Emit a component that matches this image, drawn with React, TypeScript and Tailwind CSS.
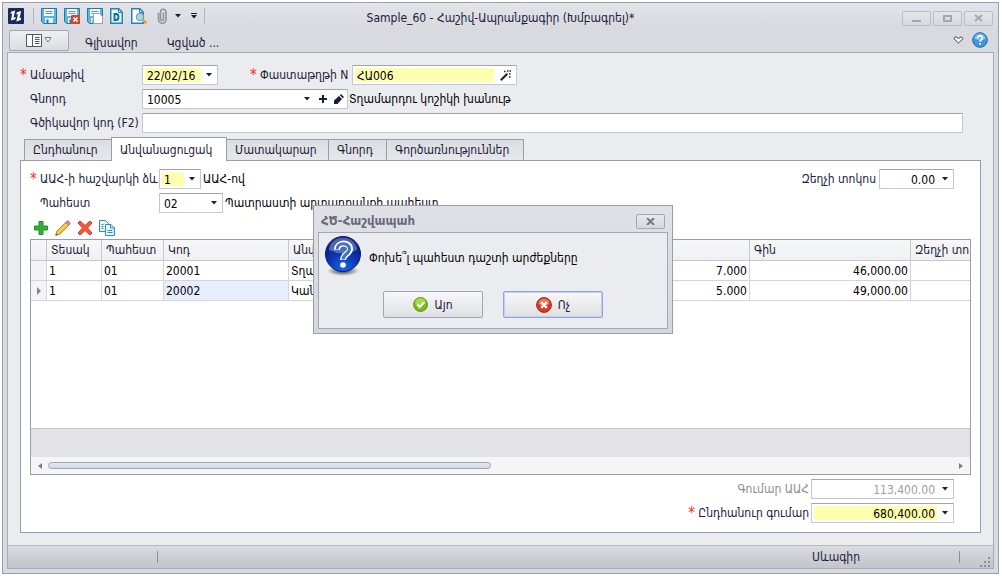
// App.tsx
import type { ReactNode } from "react";

const inputBorder =
  "border border-[#c6c7d0] border-t-[#a3a4b3] rounded-[1px] bg-white";

const Caret = () => (
  <svg width="6" height="4" viewBox="0 0 6 4" className="shrink-0" aria-hidden="true">
    <path d="M0 0h6L3 3.500z" fill="#1e1e32" />
  </svg>
);

const CaretButton = ({ label }: { label: string }) => (
  <button type="button" aria-label={label} className="flex h-full w-4 shrink-0 items-center justify-center">
    <Caret />
  </button>
);

type FieldProps = {
  id: string;
  value: string;
  width: string;
  required?: boolean;
  right?: boolean;
  muted?: boolean;
  children?: ReactNode;
};

const Field = ({ id, value, width, required, right, muted, children }: FieldProps) => (
  <div className={`flex h-5 shrink-0 items-center pl-[2px] ${inputBorder} ${width}`}>
    <input
      id={id}
      defaultValue={value}
      disabled={muted}
      className={`h-[14px] w-full min-w-0 pt-px px-[2px] outline-none ${
        required ? "bg-[#ffffb0]" : "bg-white"
      } ${right ? "text-right" : "text-left"} ${muted ? "text-[#a0a0a0]" : "text-black"}`}
    />
    {children}
  </div>
);

const Label = ({ htmlFor, required, children }: { htmlFor: string; required?: boolean; children: ReactNode }) => (
  <label htmlFor={htmlFor} className="flex shrink-0 whitespace-nowrap">
    <span className="w-[10px] shrink-0 text-[15px] text-[#ff2a2a]" aria-hidden="true">
      {required ? "*" : ""}
    </span>
    {children}
  </label>
);

const Logo = () => (
  <svg width="16" height="16" viewBox="0 0 16 16" aria-hidden="true">
    <rect width="16" height="16" rx="1" fill="#1d2a5c" />
    <path d="M3 3.800 7.200 2.500 5.600 9.500 7.800 9l-.6 2.200-4.400 1.300L4.300 5.600l-1.800.4z" fill="#fff" />
    <path d="M8.800 4.300 13.200 3l-1.700 7 1.800-.3-.6 2.200L8.300 13.500 10 6.200l-1.700.4z" fill="#fff" />
  </svg>
);

const Floppy = ({ children }: { children?: ReactNode }) => (
  <svg width="16" height="16" viewBox="0 0 16 16" aria-hidden="true">
    <path d="M.5.5h15v15h-13l-2-2z" fill="#5fb6dd" stroke="#1b7bb0" />
    <path d="M3 1h10v7H3z" fill="#f4fafd" />
    <path d="M4.500 3.500h7M4.500 5.500h7" stroke="#6f8ea3" />
    <path d="M4 10h8v5H4z" fill="#e9f2f8" />
    <path d="M5.500 11.500h2V15h-2z" fill="#1b7bb0" />
    {children}
  </svg>
);

const DocIcon = () => (
  <svg width="13" height="16" viewBox="0 0 13 16" aria-hidden="true">
    <path d="M.75.75h8l3.500 3.500v11H.75z" fill="#e8f5fb" stroke="#1e86ba" strokeWidth="1.500" />
    <path d="M8.500 1v3.500H12" fill="none" stroke="#1e86ba" />
    <path d="M4.500 6v6H6a2.500 3 0 0 0 0-6z" fill="none" stroke="#0f6a9b" strokeWidth="1.800" />
  </svg>
);

const PreviewIcon = () => (
  <svg width="16" height="16" viewBox="0 0 16 16" aria-hidden="true">
    <path d="M.75.75h8l3.500 3.500v11H.75z" fill="#fff" stroke="#1e86ba" strokeWidth="1.500" />
    <path d="M8.500 1v3.500H12" fill="none" stroke="#1e86ba" />
    <circle cx="9" cy="9" r="3.800" fill="#a5d6ee" stroke="#7b8c99" />
    <path d="m12.300 12.300 2.200 2.200" stroke="#eaa326" strokeWidth="2.600" strokeLinecap="round" />
  </svg>
);

const ClipIcon = () => (
  <svg width="10" height="16" viewBox="0 0 10 16" aria-hidden="true">
    <path
      d="M6.500 4.500v6.500a1.500 1.500 0 0 1-3 0V4a2.500 2.500 0 0 1 5.500 0v7.500a3.700 3.700 0 0 1-7.500 0V5"
      fill="none"
      stroke="#92939c"
      strokeWidth="1.600"
    />
  </svg>
);

const Divider = () => <span className="h-4 w-px shrink-0 bg-[#b4b5be]" />;

const TitleBar = () => (
  <header className="flex h-[25px] items-center bg-linear-to-b from-[#e3e4e9] to-[#d9dadf]">
    <div className="flex flex-1 items-center pl-[5px] pt-[1px]">
      <Logo />
      <div className="ml-[9px] flex items-center gap-[7px]">
        <Divider />
        <button type="button" aria-label="Save"><Floppy /></button>
        <button type="button" aria-label="Save and close">
          <Floppy>
            <rect x="7" y="7" width="9" height="9" rx="1" fill="#d8432c" />
            <path d="m9.500 9.500 4 4m0-4-4 4" stroke="#fff" strokeWidth="1.500" />
          </Floppy>
        </button>
        <button type="button" aria-label="Save and new">
          <Floppy>
            <path d="M6.500 5.500h6l3 3v7h-9z" fill="#fff" stroke="#9aa4ad" />
          </Floppy>
        </button>
        <button type="button" aria-label="Document"><DocIcon /></button>
        <button type="button" aria-label="Preview" className="ml-px"><PreviewIcon /></button>
        <button type="button" aria-label="Attach" className="ml-[3px] flex items-center gap-2">
          <ClipIcon />
          <Caret />
        </button>
        <button type="button" aria-label="Customize" className="ml-[3px] flex flex-col items-center gap-px">
          <span className="h-px w-[6px] bg-[#1e1e32]" />
          <Caret />
        </button>
        <Divider />
      </div>
    </div>
    <h1 className="pt-1">Sample_60 - Հաշիվ-Ապրանքագիր (Խմբագրել)*</h1>
    <div className="flex flex-1 items-end justify-end gap-[2px] self-stretch pb-[2px] pr-[5px]">
      {[
        { name: "Minimize", path: "M9 9h9" },
        { name: "Maximize", path: "M10 4h7v5h-7z" },
        { name: "Close", path: "m10 3 7 6m0-6-7 6" },
      ].map((b) => (
        <button
          key={b.name}
          type="button"
          aria-label={b.name}
          className="h-[15px] w-[29px] rounded-[2px] border border-[#bcbdc6] bg-linear-to-b from-[#e4e5e9] to-[#d8d9de]"
        >
          <svg width="27" height="13" viewBox="0 0 27 13" aria-hidden="true">
            <path d={b.path} fill="none" stroke="#a5a6b1" strokeWidth="2" />
          </svg>
        </button>
      ))}
    </div>
  </header>
);

const Ribbon = () => (
  <nav className="flex h-6 items-center pl-[6px] pr-[10px]">
    <button
      type="button"
      aria-label="Menu"
      className="flex h-[21px] w-[60px] items-center justify-center gap-[2px] rounded-[2px] border border-[#a5a6b3] bg-linear-to-b from-[#eeeff2] to-[#dcdde2]"
    >
      <svg width="16" height="13" viewBox="0 0 16 13" aria-hidden="true">
        <path d="M.5.5h15v12H.5zM6.500.5v12" fill="#fafafa" stroke="#55555e" />
        <path d="M9 3.500h4.500M9 5.500h4.500M9 7.500h4.500M9 9.500h4.500" stroke="#55555e" />
      </svg>
      <svg width="8" height="6" viewBox="0 0 8 6" aria-hidden="true">
        <path d="M1 .5h6L4 5z" fill="#fff" stroke="#77777f" />
      </svg>
    </button>
    <button type="button" className="ml-4 pt-[6px]">Գլխավոր</button>
    <button type="button" className="ml-[29px] pt-[6px]">Կցված ...</button>
    <div className="ml-auto flex items-center gap-2">
      <button type="button" aria-label="Collapse">
        <svg width="11" height="8" viewBox="0 0 11 8" aria-hidden="true">
          <path d="M.8 2.500 2.800.8 5.500 2.500 8.200.8l2 1.700L5.500 7z" fill="#fff" stroke="#3c3c48" />
        </svg>
      </button>
      <button type="button" aria-label="Help">
        <svg width="16" height="16" viewBox="0 0 16 16" aria-hidden="true">
          <circle cx="8" cy="8" r="7.300" fill="#3d97da" stroke="#2369a8" />
          <path d="M2 7a6 5.500 0 0 1 12 0 12 8 0 0 1-12 0" fill="#75b9ea" />
          <path d="M5.500 6.500C5.500 3.200 10.500 3.200 10.500 6c0 1.800-2.500 1.800-2.500 3.800M8 11v1.800" fill="none" stroke="#fff" strokeWidth="1.700" />
        </svg>
      </button>
    </div>
  </nav>
);

const DocumentForm = () => (
  <div className="flex flex-col gap-1 pl-3 pr-[30px]">
    <div className="flex items-center">
      <div className="w-[122px] shrink-0"><Label htmlFor="date" required>Ամսաթիվ</Label></div>
      <Field id="date" value="22/02/16" width="w-[76px]" required>
        <CaretButton label="Pick date" />
      </Field>
      <div className="ml-8 w-[102px] shrink-0"><Label htmlFor="number" required>Փաստաթղթի N</Label></div>
      <Field id="number" value="ՀԱ006" width="w-[165px]" required>
        <button type="button" aria-label="Generate" className="flex w-[22px] shrink-0 justify-center">
          <svg width="11" height="11" viewBox="0 0 11 11" aria-hidden="true">
            <path d="m.8 10.200 6-6" stroke="#1e1e32" strokeWidth="2" />
            <path d="m5.500 5.500 2-2M4 1.500h1.500M7 1h1.500M9.500 1H11M9 4h1.500M9 7h1.500" stroke="#1e1e32" strokeWidth="1.500" />
          </svg>
        </button>
      </Field>
    </div>
    <div className="flex items-center">
      <div className="w-[122px] shrink-0"><Label htmlFor="buyer">Գնորդ</Label></div>
      <Field id="buyer" value="10005" width="w-[206px]">
        <CaretButton label="Choose buyer" />
        <button type="button" aria-label="Add buyer" className="flex w-4 shrink-0 justify-center">
          <svg width="8" height="8" viewBox="0 0 8 8" aria-hidden="true">
            <path d="M4 0v8M0 4h8" stroke="#1e1e32" strokeWidth="2" />
          </svg>
        </button>
        <button type="button" aria-label="Edit buyer" className="flex w-4 shrink-0 justify-center">
          <svg width="10" height="10" viewBox="0 0 10 10" aria-hidden="true">
            <path d="M0 10V6.500L5 2l3 3-4.500 5zM5.800 1.200 7 0l3 3-1.200 1.200z" fill="#1e1e32" />
          </svg>
        </button>
      </Field>
      <span className="ml-px whitespace-nowrap text-black">Տղամարդու կոշիկի խանութ</span>
    </div>
    <div className="flex items-center">
      <div className="w-[122px] shrink-0"><Label htmlFor="barcode">Գծիկավոր կոդ (F2)</Label></div>
      <Field id="barcode" value="" width="flex-1" />
    </div>
  </div>
);

const tabs = [
  { name: "Ընդհանուր", width: "w-[88px]" },
  { name: "Անվանացուցակ", width: "w-[116px]", active: true },
  { name: "Մատակարար", width: "w-[103px]" },
  { name: "Գնորդ", width: "w-[59px]" },
  { name: "Գործառնություններ", width: "w-[138px]" },
];

const Tabs = () => (
  <div role="tablist" className="flex items-end pl-1">
    {tabs.map((t) => (
      <button
        key={t.name}
        type="button"
        role="tab"
        aria-selected={!!t.active}
        className={`-mr-px whitespace-nowrap border border-b-0 border-[#9a9bad] pl-2 text-left ${t.width} ${
          t.active
            ? "relative -mb-px h-6 bg-white"
            : "h-[21px] bg-linear-to-b from-[#dcdde1] to-[#e6e7eb]"
        }`}
      >
        {t.name}
      </button>
    ))}
  </div>
);

const RowTools = () => (
  <div className="flex h-4 items-center gap-[6px] pl-[3px]">
    <button type="button" aria-label="Add row">
      <svg width="16" height="16" viewBox="0 0 16 16" aria-hidden="true">
        <path d="M6 1.500h4V6h4.500v4H10v4.500H6V10H1.500V6H6z" fill="#33b035" stroke="#219227" />
      </svg>
    </button>
    <button type="button" aria-label="Edit row">
      <svg width="16" height="16" viewBox="0 0 16 16" aria-hidden="true">
        <path d="m.8 15.200 1-4L10.500 2.500l3 3L4.800 14.200z" fill="#f9b932" stroke="#b87820" strokeWidth=".8" />
        <path d="M3 12.500 12 4" stroke="#ffd25a" strokeWidth="1.300" />
        <path d="m10.500 2.500 1.600-1.600c.8-.8 3.800 2.200 3 3l-1.600 1.600z" fill="#cf8aa0" stroke="#8d7ba0" strokeWidth=".8" />
        <path d="m.5 15.500.5-2 1.500 1.500z" fill="#333" />
      </svg>
    </button>
    <button type="button" aria-label="Delete row">
      <svg width="16" height="16" viewBox="0 0 16 16" aria-hidden="true">
        <path d="m1 3 2-2 5 4.500L13 1l2 2-4.500 5 4.500 5-2 2-5-4.500L3 15l-2-2 4.500-5z" fill="#f4593d" stroke="#cf3422" />
      </svg>
    </button>
    <button type="button" aria-label="Copy row">
      <svg width="16" height="16" viewBox="0 0 16 16" aria-hidden="true">
        <path d="M.5.5h6l3 3v8h-9z" fill="#eaf6fc" stroke="#2a8dbd" />
        <path d="M6.500 4.500h5.500l3.500 3.500v7.500h-9z" fill="#eaf6fc" stroke="#2a8dbd" />
        <path d="M11.500 4.500V8h4M8.500 10.500h5M8.500 12.500h5M2.500 4.500h2M2.500 6.500h2M2.500 8.500h2" fill="none" stroke="#2a8dbd" />
      </svg>
    </button>
  </div>
);

const rows = [
  { type: "1", store: "01", code: "20001", name: "Տղամարդու կոշիկ", qty: "7.000", price: "46,000.00", current: false },
  { type: "1", store: "01", code: "20002", name: "Կանացի կոշիկ", qty: "5.000", price: "49,000.00", current: true },
];

const headers = ["", "Տեսակ", "Պահեստ", "Կոդ", "Անվանում", "Քանակ", "Գին", "Զեղչի տո"];

const cell = "border-b border-r border-[#d3d4dc] px-[2px]";

const ItemsGrid = () => (
  <div className="mt-[3px] flex flex-1 flex-col overflow-hidden border border-[#9a9bad] text-black">
    <table className="w-full table-fixed border-separate border-spacing-0">
      <colgroup>
        <col className="w-4" />
        <col className="w-[55px]" />
        <col className="w-[62px]" />
        <col className="w-[125px]" />
        <col />
        <col className="w-[130px]" />
        <col className="w-[161px]" />
        <col className="w-[59px]" />
      </colgroup>
      <thead>
        <tr className="h-[21px] bg-linear-to-b from-[#f7f7f8] to-[#eff0f2] text-[#20203a]">
          {headers.map((h, i) => (
            <th
              key={i}
              className="overflow-hidden whitespace-nowrap border-b border-r border-[#c6c7d2] pl-1 text-left font-normal last:border-r-0"
            >
              {h}
            </th>
          ))}
        </tr>
      </thead>
      <tbody>
        {rows.map((r) => (
          <tr key={r.code} className="h-5">
            <td className={`${cell} bg-[#f4f4f5]`}>
              {r.current && (
                <svg width="4" height="8" viewBox="0 0 4 8" className="mx-auto" aria-hidden="true">
                  <path d="M0 0v8l4-4z" fill="#85858f" />
                </svg>
              )}
            </td>
            <td className={cell}>{r.type}</td>
            <td className={cell}>{r.store}</td>
            <td className={`${cell} ${r.current ? "bg-[#e8edff]" : ""}`}>{r.code}</td>
            <td className={cell}>{r.name}</td>
            <td className={`${cell} text-right`}>{r.qty}</td>
            <td className={`${cell} text-right`}>{r.price}</td>
            <td className="border-b border-[#d3d4dc]" />
          </tr>
        ))}
      </tbody>
    </table>
    <div className="mt-auto h-[29px] shrink-0 border-t border-[#c4c5cc] bg-[#e3e2e7]" />
    <div className="flex h-[17px] shrink-0 items-center bg-[#f5f5f6] px-[7px]">
      <svg width="4" height="6" viewBox="0 0 4 6" aria-hidden="true">
        <path d="M4 0v6L0 3z" fill="#7d7d87" />
      </svg>
      <div className="mx-[6px] flex-1">
        <div className="h-[7px] w-[49%] rounded-full border border-[#a3a4b3] bg-linear-to-b from-[#e3e8f6] to-[#d3d8e6]" />
      </div>
      <svg width="4" height="6" viewBox="0 0 4 6" aria-hidden="true">
        <path d="M0 0v6l4-3z" fill="#7d7d87" />
      </svg>
    </div>
  </div>
);

const ItemsPanel = () => (
  <section className="flex flex-1 flex-col border border-[#9a9bad] bg-white px-[9px] pb-[9px] pt-2">
    <div className="flex items-center pr-[17px]">
      <div className="w-[129px] shrink-0"><Label htmlFor="vat" required>ԱԱՀ-ի հաշվարկի ձև</Label></div>
      <Field id="vat" value="1" width="w-[42px]" required>
        <CaretButton label="Choose VAT type" />
      </Field>
      <span className="ml-[2px] text-black">ԱԱՀ-ով</span>
      <label htmlFor="discount" className="ml-auto mr-[3px]">Զեղչի տոկոս</label>
      <Field id="discount" value="0.00" width="w-[75px]" right>
        <CaretButton label="Open calculator" />
      </Field>
    </div>
    <div className="mt-1 flex items-center">
      <div className="w-[129px] shrink-0"><Label htmlFor="store">Պահեստ</Label></div>
      <Field id="store" value="02" width="w-[64px]">
        <CaretButton label="Choose store" />
      </Field>
      <span className="ml-[2px] text-black">Պատրաստի արտադրանքի պահեստ</span>
    </div>
    <div className="mt-[7px]"><RowTools /></div>
    <ItemsGrid />
    <div className="mt-1 flex flex-col items-end gap-1 pr-[17px]">
      <div className="flex items-center">
        <label htmlFor="vatSum" className="mr-[2px] text-[#8c8c94]">Գումար ԱԱՀ</label>
        <Field id="vatSum" value="113,400.00" width="w-[143px]" right muted>
          <CaretButton label="Open calculator" />
        </Field>
      </div>
      <div className="flex items-center">
        <div className="mr-[2px]"><Label htmlFor="total" required>Ընդհանուր գումար</Label></div>
        <Field id="total" value="680,400.00" width="w-[143px]" right required>
          <CaretButton label="Open calculator" />
        </Field>
      </div>
    </div>
  </section>
);

const StatusBar = () => (
  <footer className="flex h-[23px] items-center border-t border-[#b9bac1] bg-linear-to-b from-[#dadbe0] to-[#c3c4cc] pr-[2px]">
    <span className="ml-[149px] h-3 w-px bg-[#8d8e99]" />
    <span className="ml-auto">Սևագիր</span>
    <span className="ml-[99px] h-3 w-px bg-[#8d8e99]" />
    <svg width="11" height="11" viewBox="0 0 11 11" className="ml-5 self-end" aria-hidden="true">
      <path d="M8 0h2v2H8zM4 4h2v2H4zM8 4h2v2H8zM0 8h2v2H0zM4 8h2v2H4zM8 8h2v2H8z" fill="#8d8e99" />
    </svg>
  </footer>
);

const ConfirmDialog = () => (
  <div
    role="dialog"
    aria-labelledby="dialog-title"
    className="absolute left-[313px] top-[205px] w-[360px] border border-[#9a9bad] bg-linear-to-b from-[#e0e1e6] to-[#d6d7dc] px-1 pb-1"
  >
    <div className="flex h-[26px] items-center justify-between pl-[3px] pr-[3px] pt-1">
      <h2 id="dialog-title" className="text-[13px] font-bold text-[#686979]">ՀԾ-Հաշվապահ</h2>
      <button
        type="button"
        aria-label="Close dialog"
        className="flex h-[15px] w-[29px] items-center justify-center rounded-[2px] border border-[#a5a6b3] bg-linear-to-b from-[#e8e9ed] to-[#d6d7dc]"
      >
        <svg width="9" height="7" viewBox="0 0 9 7" aria-hidden="true">
          <path d="m1 0 7 7M8 0 1 7" stroke="#777885" strokeWidth="2" />
        </svg>
      </button>
    </div>
    <div className="border border-[#a5a6b3] bg-[#ebecef] pb-[10px] pt-[3px]">
      <div className="flex items-center pl-[6px]">
        <svg width="36" height="40" viewBox="0 0 36 40" aria-hidden="true">
          <defs>
            <radialGradient id="ball" cx="50%" cy="90%" r="85%">
              <stop offset="0" stopColor="#1668e8" />
              <stop offset=".5" stopColor="#0b35b0" />
              <stop offset="1" stopColor="#06197a" />
            </radialGradient>
            <radialGradient id="shade">
              <stop offset="0" stopColor="#333" />
              <stop offset="1" stopColor="#333" stopOpacity="0" />
            </radialGradient>
          </defs>
          <ellipse cx="18" cy="35" rx="16" ry="5" fill="url(#shade)" />
          <circle cx="18" cy="18" r="17.500" fill="url(#ball)" stroke="#071d74" />
          <path d="M4 14a14 12.500 0 0 1 28 0q-14 7-28 0" fill="#fff" opacity=".3" />
          <path d="M12 14C12 5.500 25 5.500 25 13c0 5-7 5-7 11" fill="none" stroke="#fff" strokeWidth="6" />
          <path d="M12 13.500C12 6 24.500 6 24.500 13c0 5-6.500 5-6.500 10.500" fill="none" stroke="#3f6ecb" strokeWidth="3" />
          <circle cx="18" cy="29" r="2.800" fill="#fff" />
        </svg>
        <p className="ml-2 pt-1 text-black">Փոխե՞լ պահեստ դաշտի արժեքները</p>
      </div>
      <div className="mt-[15px] flex justify-center gap-5">
        <button
          type="button"
          className="flex h-[27px] w-[100px] items-center justify-center gap-[6px] rounded-[2px] border border-[#a3a4b3] bg-linear-to-b from-[#f8f8fa] to-[#dfe0e5]"
        >
          <svg width="15" height="15" viewBox="0 0 15 15" aria-hidden="true">
            <circle cx="7.500" cy="7.500" r="6.900" fill="#7cbb1a" stroke="#568c0c" />
            <path d="M2 6.500a5.500 5.500 0 0 1 11 0q-5.500 3-11 0" fill="#a9d84e" />
            <path d="m4.200 7.500 2.500 2.500L11 5.500" fill="none" stroke="#fff" strokeWidth="2" />
          </svg>
          Այո
        </button>
        <button
          type="button"
          className="flex h-[27px] w-[100px] items-center justify-center gap-[6px] rounded-[2px] border border-[#8ea6d8] bg-linear-to-b from-[#f8f8fa] to-[#dfe0e5] ring-1 ring-inset ring-[#c3d0ec]"
        >
          <svg width="16" height="16" viewBox="0 0 16 16" aria-hidden="true">
            <circle cx="8" cy="8" r="7.400" fill="#d83a20" stroke="#a8230f" />
            <path d="M2.500 7a5.500 5.500 0 0 1 11 0q-5.500 3-11 0" fill="#ee7660" />
            <path d="m5.200 5.200 5.600 5.600m0-5.600-5.600 5.600" stroke="#fff" strokeWidth="2.400" />
          </svg>
          Ոչ
        </button>
      </div>
    </div>
  </div>
);

const App = () => {
  return (
    <div className="relative flex min-h-screen flex-col bg-white p-[2px] pr-[3px] font-['DejaVu_Sans_Condensed','DejaVu_Sans',sans-serif] text-[12px] leading-[14px] text-[#20203a]">
      <div className="flex flex-1 flex-col border border-[#9a9bad] bg-[#d9dadf]">
        <TitleBar />
        <Ribbon />
        <div className="mx-1 mb-1 flex flex-1 flex-col border border-[#a9aab6] bg-[#ebecef]">
          <main className="flex flex-1 flex-col pb-3 pt-3">
            <DocumentForm />
            <div className="mt-1 flex flex-1 flex-col px-3">
              <Tabs />
              <ItemsPanel />
            </div>
          </main>
          <StatusBar />
        </div>
      </div>
      <ConfirmDialog />
    </div>
  );
};

export default App;
